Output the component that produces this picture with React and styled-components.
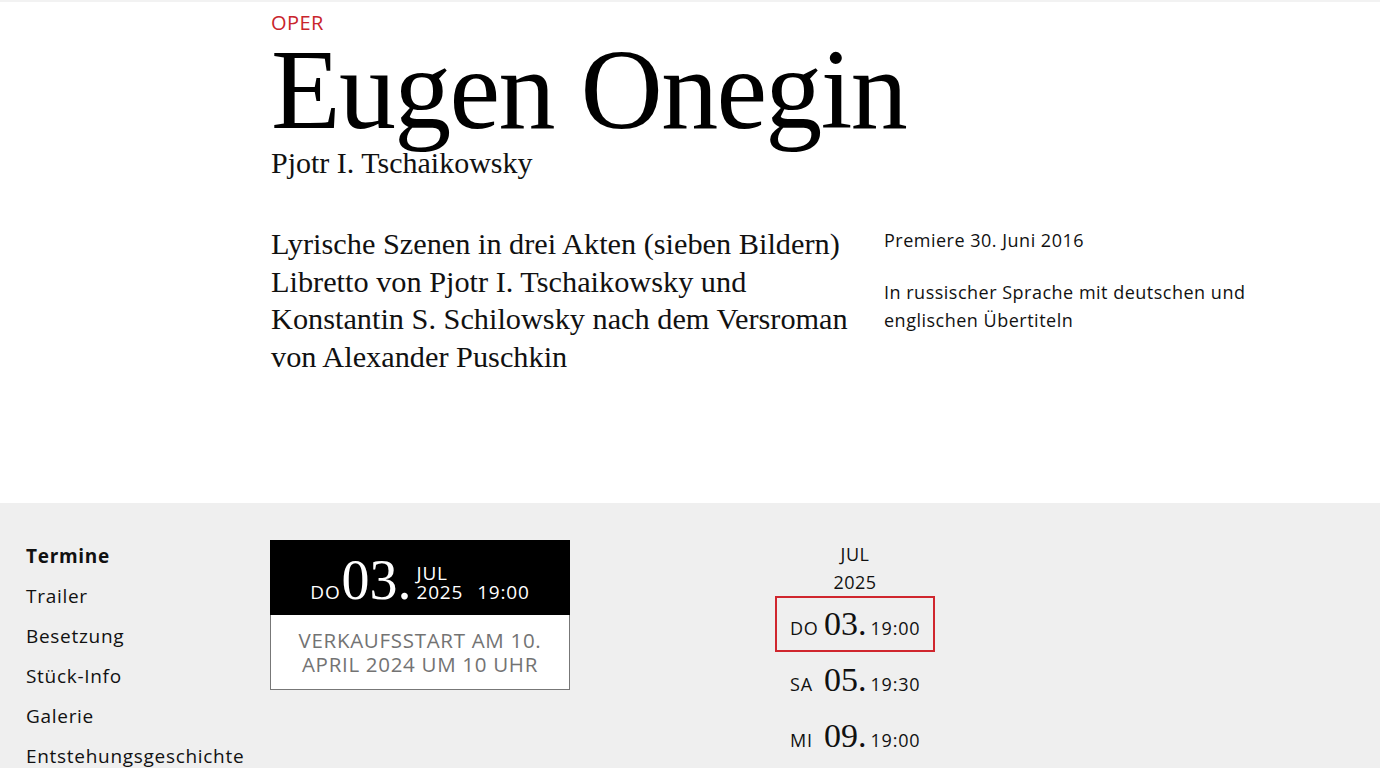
import React from "react";
import styled, { createGlobalStyle } from "styled-components";

const GlobalStyle = createGlobalStyle`
  html, body {
    margin: 0;
    padding: 0;
    background: #ffffff;
  }
  body {
    font-family: "Open Sans", "Liberation Sans", sans-serif;
    color: #111;
  }
`;

const SANS = `"Open Sans", "Liberation Sans", sans-serif`;
const SERIF = `"Liberation Serif", "DejaVu Serif", serif`;

const Page = styled.div`
  min-height: 768px;
  border-top: 2px solid #f2f2f2;
  overflow: hidden;
`;

const Hero = styled.header`
  padding: 8px 0 0 271px;
  height: 501px;
  box-sizing: border-box;
`;

const Kicker = styled.div`
  font-family: ${SANS};
  font-size: 20px;
  line-height: 26px;
  color: #c9252c;
  letter-spacing: 0.4px;
`;

const Title = styled.h1`
  margin: 0;
  font-family: ${SERIF};
  font-weight: 400;
  font-size: 114px;
  line-height: 108px;
  letter-spacing: -1.7px;
  color: #000;
`;

const Composer = styled.div`
  font-family: ${SERIF};
  font-size: 30px;
  line-height: 32px;
  margin-top: 3px;
  color: #111;
`;

const InfoRow = styled.div`
  display: flex;
  gap: 33px;
  margin-top: 47px;
`;

const Lead = styled.p`
  margin: 0;
  width: 580px;
  white-space: nowrap;
  font-family: ${SERIF};
  font-size: 30.3px;
  line-height: 37.5px;
  color: #111;
`;

const Aside = styled.div`
  width: 380px;
  font-family: ${SANS};
  font-size: 18px;
  line-height: 28px;
  letter-spacing: 0.5px;
  color: #111;
  display: flex;
  flex-direction: column;
  gap: 24px;
`;

const Grey = styled.section`
  background: #efefef;
  min-height: 265px;
  display: flex;
  align-items: flex-start;
  padding: 33px 0 0 26px;
`;

const Nav = styled.nav`
  width: 244px;
  display: flex;
  flex-direction: column;
`;

const NavItem = styled.a`
  font-family: ${SANS};
  font-size: 19px;
  line-height: 40px;
  letter-spacing: 0.7px;
  color: #111;
  font-weight: ${({ $active }) => ($active ? 700 : 400)};
  text-decoration: none;
`;

const Card = styled.div`
  width: 300px;
  margin-top: 4px;
`;

const CardHead = styled.div`
  background: #000;
  color: #fff;
  height: 75px;
  box-sizing: border-box;
  padding-bottom: 7px;
  display: flex;
  align-items: flex-end;
  justify-content: center;
`;

const HeadLine = styled.div`
  white-space: nowrap;
  line-height: 1;
`;

const Small = styled.span`
  display: inline-block;
  font-family: ${SANS};
  font-size: ${({ $fs }) => $fs || 18}px;
  letter-spacing: 0.8px;
  width: ${({ $w }) => ($w ? `${$w}px` : "auto")};
`;

const BigNum = styled.span`
  font-family: ${SERIF};
  font-size: ${({ $size }) => $size}px;
  line-height: 1;
  margin: 0 ${({ $gap }) => $gap}px 0 ${({ $lead }) => $lead}px;
`;

const Stack = styled.span`
  display: inline-block;
  font-family: ${SANS};
  font-size: 19px;
  line-height: 19px;
  letter-spacing: 0.8px;
  margin-right: 14px;

  & > span {
    display: block;
  }
`;

const CardFoot = styled.div`
  background: #fff;
  border: 1px solid #777;
  border-top: none;
  height: 75px;
  box-sizing: border-box;
  display: flex;
  align-items: center;
  justify-content: center;
  text-align: center;
  font-family: ${SANS};
  font-size: 20.5px;
  line-height: 24px;
  letter-spacing: 0.7px;
  color: #737373;
  text-transform: uppercase;
`;

const Calendar = styled.div`
  margin: 4px 0 0 205px;
  width: 160px;
  display: flex;
  flex-direction: column;
`;

const Month = styled.div`
  font-family: ${SANS};
  font-size: 18px;
  line-height: 28px;
  letter-spacing: 0.5px;
  text-align: center;
  color: #111;
`;

const Entry = styled.div`
  height: 56px;
  box-sizing: border-box;
  border: 2px solid ${({ $selected }) => ($selected ? "#d0262e" : "transparent")};
  display: flex;
  align-items: baseline;
  padding: 9px 0 0 13px;
  color: #111;
  line-height: 1;
`;

const dates = [
  { day: "DO", num: "03.", time: "19:00", selected: true },
  { day: "SA", num: "05.", time: "19:30" },
  { day: "MI", num: "09.", time: "19:00" },
];

const navItems = ["Termine", "Trailer", "Besetzung", "Stück-Info", "Galerie", "Entstehungsgeschichte"];

const App = () => {
  return (
    <Page>
      <GlobalStyle />
      <Hero>
        <Kicker>OPER</Kicker>
        <Title>Eugen Onegin</Title>
        <Composer>Pjotr I. Tschaikowsky</Composer>
        <InfoRow>
          <Lead>
            Lyrische Szenen in drei Akten (sieben Bildern)
            <br />
            Libretto von Pjotr I. Tschaikowsky und
            <br />
            Konstantin S. Schilowsky nach dem Versroman
            <br />
            von Alexander Puschkin
          </Lead>
          <Aside>
            <div>Premiere 30. Juni 2016</div>
            <div>
              In russischer Sprache mit deutschen und
              <br />
              englischen Übertiteln
            </div>
          </Aside>
        </InfoRow>
      </Hero>

      <Grey>
        <Nav>
          {navItems.map((item, i) => (
            <NavItem key={item} $active={i === 0}>
              {item}
            </NavItem>
          ))}
        </Nav>

        <Card>
          <CardHead>
            <HeadLine>
              <Small $fs={19}>DO</Small>
              <BigNum $size={56} $gap={5} $lead={1}>
                03.
              </BigNum>
              <Stack>
                <span>JUL</span>
                <span>2025</span>
              </Stack>
              <Small $fs={19}>19:00</Small>
            </HeadLine>
          </CardHead>
          <CardFoot>
            Verkaufsstart am 10.
            <br />
            April 2024 um 10 Uhr
          </CardFoot>
        </Card>

        <Calendar>
          <Month>
            JUL
            <br />
            2025
          </Month>
          {dates.map((d) => (
            <Entry key={d.num} $selected={d.selected}>
              <Small $w={34}>{d.day}</Small>
              <BigNum $size={34} $gap={4} $lead={0}>
                {d.num}
              </BigNum>
              <Small>{d.time}</Small>
            </Entry>
          ))}
        </Calendar>
      </Grey>
    </Page>
  );
};

export default App;
